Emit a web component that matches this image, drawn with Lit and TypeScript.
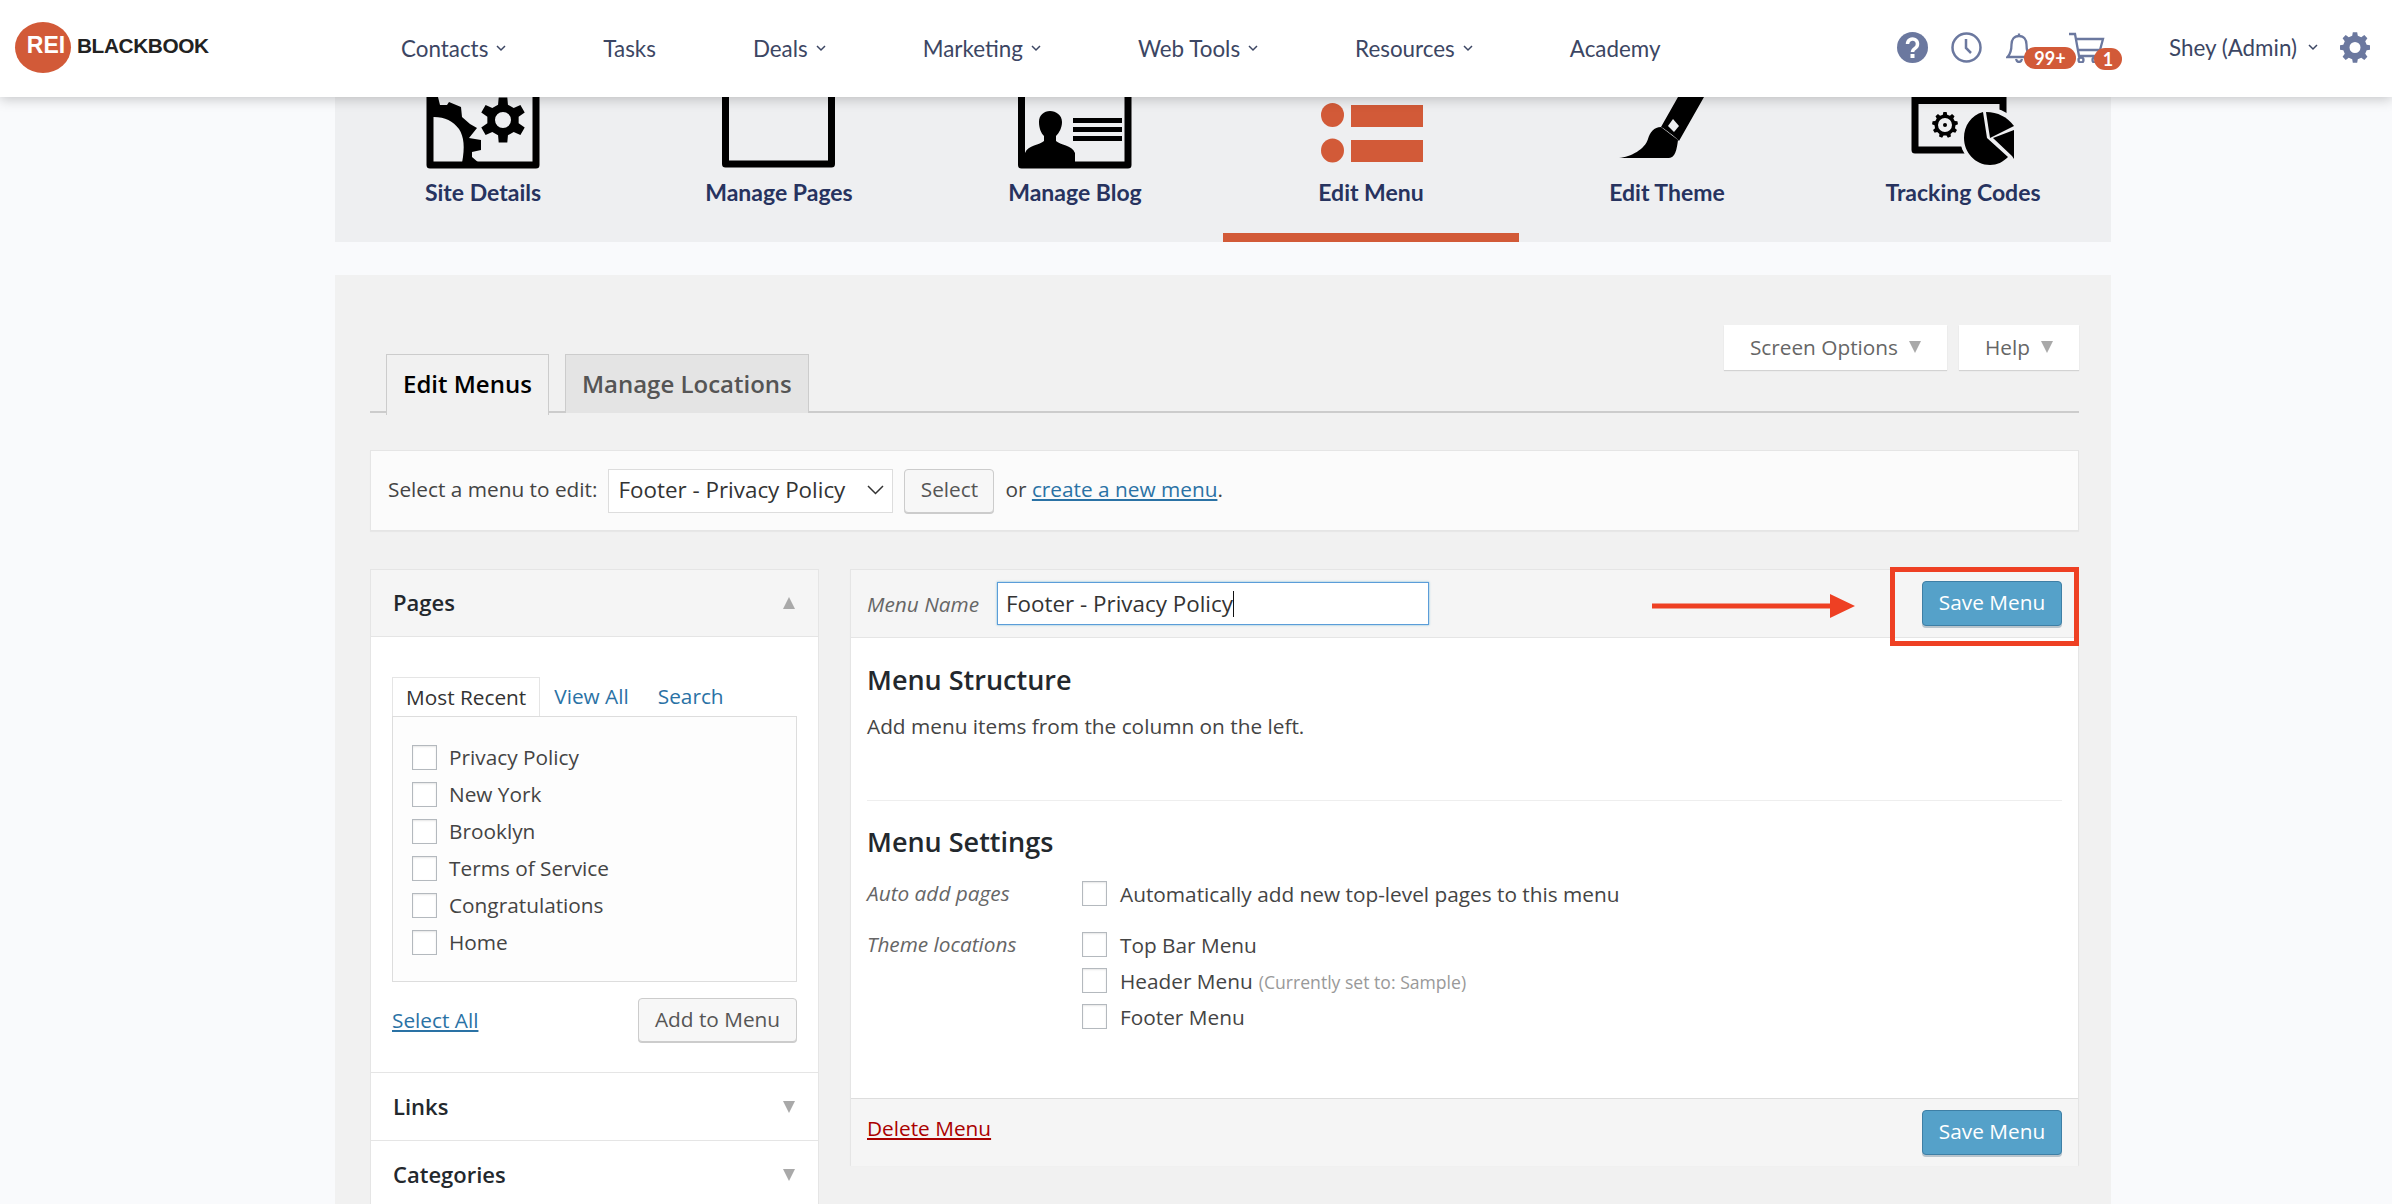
import { LitElement, html, css } from "lit";
import { customElement } from "lit/decorators.js";

// gear outline with a round hole, fill with evenodd
function gearPath(cx: number, cy: number, rOut: number, rIn: number, teeth: number, hole: number) {
  const step = (Math.PI * 2) / teeth;
  const pts: string[] = [];
  const pt = (r: number, a: number) =>
    `${(cx + r * Math.cos(a)).toFixed(2)} ${(cy + r * Math.sin(a)).toFixed(2)}`;
  for (let i = 0; i < teeth; i++) {
    const a = i * step - Math.PI / 2;
    pts.push(pt(rOut, a - step * 0.18), pt(rOut, a + step * 0.18), pt(rIn, a + step * 0.3), pt(rIn, a + step * 0.7));
  }
  const ring = `M${pts.join("L")}Z`;
  return `${ring}M${cx - hole} ${cy}a${hole} ${hole} 0 1 0 ${hole * 2} 0a${hole} ${hole} 0 1 0 ${-hole * 2} 0Z`;
}

const chevron = html`<svg class="chev" width="10" height="7" viewBox="0 0 10 7"><path d="M1 1l4 4 4-4" fill="none" stroke="currentColor" stroke-width="1.500"/></svg>`;

const NAV = [
  { label: "Contacts", drop: true },
  { label: "Tasks", drop: false },
  { label: "Deals", drop: true },
  { label: "Marketing", drop: true },
  { label: "Web Tools", drop: true },
  { label: "Resources", drop: true },
  { label: "Academy", drop: false },
];

const TABS = [
  {
    label: "Site Details",
    icon: html`<svg class="tab-icon" viewBox="0 0 120 72">
      <path d="M7 0V68H113V0" fill="none" stroke="#000" stroke-width="7" stroke-linejoin="round"/>
      <path d="M4 0H15L17 8L24 8L26 5L38 10L39 20L47 27L54 31L46 41L58 43L58 53L49 55L49 60L56 66L39 66C42 50 41 40 36 32C30 24 22 20 11 20L4 20Z"/>
      <path fill-rule="evenodd" d="${gearPath(80, 23, 23, 16, 6, 8)}"/>
    </svg>`,
  },
  {
    label: "Manage Pages",
    icon: html`<svg class="tab-icon" viewBox="0 0 120 72">
      <path d="M6.500 0V67H112.500V0" fill="none" stroke="#000" stroke-width="7" stroke-linejoin="round"/>
    </svg>`,
  },
  {
    label: "Manage Blog",
    icon: html`<svg class="tab-icon" viewBox="0 0 120 72">
      <path d="M6.500 0V68H113V0" fill="none" stroke="#000" stroke-width="7" stroke-linejoin="round"/>
      <path d="M35 14C29 14 24 18 24 25C24 31 26 36 29 39L29 44C25 48 13 48 10 56L10 70H60V56C57 48 45 48 41 44L41 39C44 36 47 31 47 25C47 18 41 14 35 14Z"/>
      <rect x="58" y="21" width="49" height="5"/>
      <rect x="58" y="30" width="49" height="5"/>
      <rect x="58" y="39" width="49" height="5"/>
    </svg>`,
  },
  {
    label: "Edit Menu",
    icon: html`<svg class="tab-icon" viewBox="0 0 120 72" fill="#d25a38">
      <ellipse cx="21.500" cy="18" rx="11.500" ry="12"/>
      <ellipse cx="21.500" cy="53.500" rx="11.500" ry="12"/>
      <rect x="40" y="8" width="72" height="22"/>
      <rect x="40" y="43" width="72" height="22"/>
    </svg>`,
  },
  {
    label: "Edit Theme",
    icon: html`<svg class="tab-icon" viewBox="0 0 120 72">
      <path d="M71 0H97L72 44C71 42 58 32 54 30Z"/>
      <path d="M54 30C47 30 43 35 41 42C38 52 24 60 12 61H62C68 61 70 52 71 43Z"/>
      <path d="M66 22L72 29L67 35L61 29Z" fill="#eeeff1"/>
    </svg>`,
  },
  {
    label: "Tracking Codes",
    icon: html`<svg class="tab-icon" viewBox="0 0 120 72">
      <path d="M12 0V53H100V0" fill="none" stroke="#000" stroke-width="7" stroke-linejoin="round"/>
      <rect x="12" y="0" width="88" height="7"/>
      <path fill-rule="evenodd" d="${gearPath(42, 28, 13, 10.500, 9, 7)}"/>
      <circle cx="42" cy="28" r="2"/>
      <ellipse cx="87" cy="41" rx="30" ry="30" fill="#eeeff1"/>
      <path d="M87 41L83 15C95 15 104 20 111 29Z"/>
      <path d="M84 41L80 15C68 18 61 29 61 41C61 55 72 68 87 68C94 68 100 65 105 60Z"/>
      <path d="M90 41L111 33V62L109 59Z"/>
    </svg>`,
  },
];

const RECENT = ["Privacy Policy", "New York", "Brooklyn", "Terms of Service", "Congratulations", "Home"];

@customElement("app-root")
export class AppRoot extends LitElement {
  static styles = css`
    :host {
      display: block;
      height: 1204px;
      overflow: hidden;
      background: #f9fafc;
      font-family: "Open Sans", sans-serif;
      font-size: 20.800px;
      color: #444;
    }

    * {
      box-sizing: border-box;
    }

    a {
      color: #2a72a5;
    }

    /* top bar */
    .topbar {
      position: relative;
      z-index: 5;
      display: flex;
      align-items: center;
      height: 97px;
      padding-left: 15px;
      background: #fff;
      box-shadow: 0 2px 12px rgba(0, 0, 0, 0.22);
      font-family: Lato, sans-serif;
      font-size: 22.400px;
      color: #3c4663;
    }

    .logo {
      display: flex;
      align-items: center;
      gap: 6px;
      width: 386px;
      margin-top: -2px;
    }

    .logo-mark {
      display: flex;
      align-items: center;
      justify-content: center;
      width: 56px;
      height: 51px;
      padding: 0 0 4px 6px;
      border-radius: 50%;
      background: #d25a38;
      color: #fff;
      font: 700 23px "Liberation Sans", sans-serif;
    }

    .logo-word {
      font: 700 20.800px "Liberation Sans", sans-serif;
      letter-spacing: -0.4px;
      color: #222;
      margin-top: -4px;
    }

    .nav {
      display: flex;
      gap: 97px;
    }

    .nav-item {
      display: flex;
      align-items: center;
      gap: 8px;
    }

    .tools {
      display: flex;
      align-items: center;
      margin-left: auto;
      margin-right: 22px;
      height: 31px;
      margin-top: -2px;
    }

    .tool {
      position: relative;
      display: block;
      height: 31px;
      color: #6b789f;
    }

    .badge {
      position: absolute;
      display: flex;
      align-items: center;
      justify-content: center;
      height: 22px;
      border-radius: 11px;
      background: #d25a38;
      color: #fff;
      font-size: 18px;
      font-weight: 700;
    }

    .badge.bell {
      left: 18px;
      top: 15px;
      width: 52px;
    }

    .badge.cart {
      left: 25px;
      top: 16px;
      width: 28px;
    }

    .user {
      display: flex;
      align-items: center;
      gap: 11px;
      margin-left: 64px;
      margin-right: 22px;
    }

    /* icon tabs */
    .site-tabs {
      display: grid;
      grid-template-columns: repeat(6, 296px);
      width: 1776px;
      height: 145px;
      margin-left: 335px;
      background: #eeeff1;
    }

    .site-tab {
      display: flex;
      flex-direction: column;
      align-items: center;
      font-family: Lato, sans-serif;
      font-size: 23px;
      font-weight: 700;
      line-height: 26px;
      color: #27335f;
    }

    .site-tab.active {
      border-bottom: 9px solid #d25a38;
    }

    .tab-icon {
      display: block;
      width: 120px;
      height: 72px;
      margin-bottom: 10px;
    }

    /* wp admin panel */
    .panel {
      width: 1776px;
      height: 929px;
      margin: 33px 0 0 335px;
      padding: 50px 32px 0 35px;
      background: #f1f1f1;
    }

    .head-row {
      display: flex;
      justify-content: space-between;
      align-items: flex-start;
      height: 88px;
      border-bottom: 2px solid #ccc;
    }

    .wp-tabs {
      display: flex;
      gap: 16px;
      padding: 29px 0 0 16px;
    }

    .wp-tab {
      height: 59px;
      padding: 0 16px;
      line-height: 57px;
      border: 1.500px solid #ccc;
      border-bottom: 0;
      background: #e4e4e4;
      color: #555;
      font-size: 24px;
      font-weight: 600;
    }

    .wp-tab.active {
      height: 61px;
      background: #f1f1f1;
      color: #000;
    }

    .screen-meta {
      display: flex;
      gap: 12px;
    }

    .meta-btn {
      display: flex;
      align-items: center;
      gap: 11px;
      height: 45px;
      padding: 0 26px 2px 26px;
      background: #fff;
      color: #666;
      box-shadow: 0 1px 1px rgba(0, 0, 0, 0.12);
    }

    .down {
      width: 0;
      height: 0;
      border-left: 6.500px solid transparent;
      border-right: 6.500px solid transparent;
      border-top: 12px solid #a9a9a9;
    }

    .up {
      border-top: 0;
      border-bottom: 12px solid #a9a9a9;
    }

    .select-bar {
      display: flex;
      align-items: center;
      height: 81px;
      margin-top: 37px;
      padding-left: 17px;
      border: 1px solid #e5e5e5;
      background: #fbfbfb;
      box-shadow: 0 1px 1px rgba(0, 0, 0, 0.04);
    }

    .bar-text {
      padding-bottom: 3px;
    }

    .select {
      display: flex;
      align-items: center;
      justify-content: space-between;
      width: 285px;
      height: 44px;
      margin-left: 11px;
      padding: 0 8px 2px 9px;
      border: 1px solid #ddd;
      background: #fff;
      color: #333;
      font-size: 22.400px;
    }

    .btn {
      display: flex;
      align-items: center;
      justify-content: center;
      height: 44px;
      padding-bottom: 3px;
      border: 1px solid #ccc;
      border-radius: 4px;
      background: #f7f7f7;
      box-shadow: 0 1px 0 #ccc;
      color: #555;
    }

    .select-btn {
      width: 90px;
      margin: 0 11px;
    }

    .columns {
      display: grid;
      grid-template-columns: 449px 1229px;
      gap: 31px;
      margin-top: 38px;
      align-items: start;
    }

    /* left accordion */
    .pages {
      height: 640px;
      border: 1px solid #e5e5e5;
      background: #fff;
    }

    .acc-head {
      display: flex;
      align-items: center;
      justify-content: space-between;
      height: 68px;
      padding: 0 23px 2px 22px;
      color: #23282d;
      font-size: 22px;
      font-weight: 600;
    }

    .acc-head .down {
      margin-top: 2px;
    }

    .acc-head.open {
      height: 67px;
      background: #f5f5f5;
      border-bottom: 1px solid #e5e5e5;
    }

    .acc-head.closed {
      border-top: 1px solid #e5e5e5;
    }

    .acc-body {
      height: 435px;
      padding: 40px 21px 0;
    }

    .mini-tabs {
      display: flex;
      align-items: flex-end;
      height: 39px;
    }

    .mini-tab {
      height: 39px;
      line-height: 38px;
      padding: 0 13px;
      border: 1px solid #e5e5e5;
      border-bottom: 0;
      color: #333;
    }

    .mini-link {
      height: 39px;
      line-height: 38px;
      margin-left: 14px;
      margin-right: 15px;
      color: #2a72a5;
    }

    .recent {
      display: flex;
      flex-direction: column;
      gap: 12px;
      height: 266px;
      padding: 28px 19px 0;
      border: 1px solid #ddd;
      background: #fdfdfd;
    }

    .check-row {
      display: flex;
      align-items: center;
      gap: 13px;
      height: 25px;
    }

    .recent .check-row {
      gap: 12px;
    }

    .recent .check-row span {
      padding-bottom: 2px;
    }

    .check {
      flex: none;
      width: 25px;
      height: 25px;
      margin: 0;
      appearance: none;
      border: 1px solid #b4b9be;
      background: #fff;
      box-shadow: inset 0 1px 2px rgba(0, 0, 0, 0.1);
    }

    .acc-foot {
      display: flex;
      align-items: center;
      justify-content: space-between;
      margin-top: 16px;
    }

    .add-btn {
      width: 159px;
    }

    /* right column */
    .menu-box {
      height: 596px;
      border: 1px solid #e5e5e5;
      background: #fff;
      box-shadow: 0 1px 1px rgba(0, 0, 0, 0.04);
    }

    .menu-head {
      position: relative;
      display: flex;
      align-items: center;
      height: 68px;
      padding: 0 16px 0 16px;
      background: #f5f5f5;
      border-bottom: 1px solid #e5e5e5;
    }

    .menu-label {
      width: 130px;
      font-style: italic;
      color: #666;
    }

    .name-input {
      display: flex;
      align-items: center;
      width: 432px;
      height: 43px;
      padding-left: 8px;
      border: 1.500px solid #5b9dd9;
      background: #fff;
      color: #333;
      font-size: 22.400px;
      box-shadow: 0 0 2px rgba(30, 140, 190, 0.6);
    }

    .caret {
      width: 1.500px;
      height: 26px;
      background: #111;
    }

    .primary {
      display: flex;
      align-items: center;
      justify-content: center;
      width: 140px;
      height: 45px;
      padding-bottom: 3px;
      margin-left: auto;
      border: 1px solid #3e7fa5;
      border-radius: 4px;
      background: #55a1c9;
      box-shadow: 0 2px 0 #b8c4cc;
      color: #fff;
    }

    .callout {
      position: absolute;
      top: -3px;
      right: -1px;
      width: 189px;
      height: 79px;
      border: 5px solid #ee4023;
      pointer-events: none;
    }

    .arrow {
      position: absolute;
      left: 801px;
      top: 23px;
    }

    .menu-body {
      height: 460px;
      padding: 0 16px;
    }

    .block-title {
      margin: 0;
      font-size: 27px;
      font-weight: 600;
      color: #23282d;
      line-height: 34px;
    }

    .structure {
      height: 163px;
      padding-top: 25px;
      margin-bottom: 0;
      border-bottom: 1.500px solid #eee;
    }

    .structure p {
      margin: 15px 0 0;
    }

    .settings {
      padding-top: 24px;
    }

    .settings-grid {
      display: grid;
      grid-template-columns: 215px 1fr;
      margin-top: 22px;
    }

    .settings-label {
      font-style: italic;
      color: #666;
      line-height: 24px;
    }

    .settings-value {
      display: flex;
      flex-direction: column;
      gap: 11px;
    }

    .settings-value + .settings-label,
    .settings-value + .settings-label + .settings-value {
      margin-top: 26px;
    }

    .note {
      font-size: 17.600px;
      color: #999;
      margin-left: 6px;
    }

    .menu-foot {
      display: flex;
      align-items: center;
      height: 68px;
      padding: 0 10px 0 16px;
      background: #f5f5f5;
      border-top: 1px solid #ddd;
    }

    .menu-foot .primary {
      margin-right: 6px;
    }

    .delete {
      margin-top: -9px;
      color: #a00;
    }
  `;

  render() {
    return html`
      <header class="topbar">
        <div class="logo">
          <div class="logo-mark">REI</div>
          <div class="logo-word">BLACKBOOK</div>
        </div>
        <nav class="nav">
          ${NAV.map((n) => html`<div class="nav-item">${n.label}${n.drop ? chevron : ""}</div>`)}
        </nav>
        <div class="tools">
          ${this.renderTools()}
        </div>
      </header>

      <div class="site-tabs">
        ${TABS.map(
          (t) => html`<div class="site-tab ${t.label === "Edit Menu" ? "active" : ""}">${t.icon}${t.label}</div>`
        )}
      </div>

      <main class="panel">
        <div class="head-row">
          <div class="wp-tabs">
            <div class="wp-tab active">Edit Menus</div>
            <div class="wp-tab">Manage Locations</div>
          </div>
          <div class="screen-meta">
            <div class="meta-btn">Screen Options <span class="down"></span></div>
            <div class="meta-btn">Help <span class="down"></span></div>
          </div>
        </div>

        <div class="select-bar">
          <span class="bar-text">Select a menu to edit:</span>
          <div class="select">
            Footer - Privacy Policy
            <svg width="17" height="10" viewBox="0 0 17 10"><path d="M1 1l7.500 7.500L16 1" fill="none" stroke="#333" stroke-width="1.500"/></svg>
          </div>
          <div class="btn select-btn">Select</div>
          <span class="bar-text">or <a href="#">create a new menu</a>.</span>
        </div>

        <div class="columns">
          <section class="pages">
            <div class="acc-head open">Pages <span class="down up"></span></div>
            <div class="acc-body">
              <div class="mini-tabs">
                <div class="mini-tab">Most Recent</div>
                <div class="mini-link">View All</div>
                <div class="mini-link">Search</div>
              </div>
              <div class="recent">
                ${RECENT.map(
                  (r) => html`<label class="check-row"><input class="check" type="checkbox" /><span>${r}</span></label>`
                )}
              </div>
              <div class="acc-foot">
                <a href="#">Select All</a>
                <div class="btn add-btn">Add to Menu</div>
              </div>
            </div>
            <div class="acc-head closed">Links <span class="down"></span></div>
            <div class="acc-head closed">Categories <span class="down"></span></div>
          </section>

          <section class="menu-box">
            <div class="menu-head">
              <div class="menu-label">Menu Name</div>
              <div class="name-input">Footer - Privacy Policy<span class="caret"></span></div>
              <div class="primary">Save Menu</div>
              <svg class="arrow" width="203" height="26" viewBox="0 0 203 26">
                <path d="M0 10.500H178V1L203 13L178 25V15.500H0Z" fill="#ee4023"/>
              </svg>
              <div class="callout"></div>
            </div>
            <div class="menu-body">
              <div class="structure">
                <h3 class="block-title">Menu Structure</h3>
                <p>Add menu items from the column on the left.</p>
              </div>
              <div class="settings">
                <h3 class="block-title">Menu Settings</h3>
                <div class="settings-grid">
                  <div class="settings-label">Auto add pages</div>
                  <div class="settings-value">
                    <label class="check-row"><input class="check" type="checkbox" />Automatically add new top-level pages to this menu</label>
                  </div>
                  <div class="settings-label">Theme locations</div>
                  <div class="settings-value">
                    <label class="check-row"><input class="check" type="checkbox" />Top Bar Menu</label>
                    <label class="check-row"><input class="check" type="checkbox" /><span>Header Menu<span class="note">(Currently set to: Sample)</span></span></label>
                    <label class="check-row"><input class="check" type="checkbox" />Footer Menu</label>
                  </div>
                </div>
              </div>
            </div>
            <div class="menu-foot">
              <a class="delete" href="#">Delete Menu</a>
              <div class="primary">Save Menu</div>
            </div>
          </section>
        </div>
      </main>
    `;
  }

  renderTools() {
    return html`
      <svg class="tool" width="31" height="31" viewBox="0 0 31 31">
        <circle cx="15.500" cy="15.500" r="15.500" fill="currentColor"/>
        <path d="M10.500 12a5 5 0 1 1 7.800 4.100c-1.800 1.200-2.800 2-2.800 4" fill="none" stroke="#fff" stroke-width="3.500"/>
        <rect x="13.500" y="22" width="4" height="4" fill="#fff"/>
      </svg>
      <svg class="tool" style="margin-left:23px" width="31" height="31" viewBox="0 0 31 31" fill="none" stroke="currentColor">
        <circle cx="15.500" cy="15.500" r="14" stroke-width="2.500"/>
        <path d="M15 7v9l5 5" stroke-width="2.500"/>
      </svg>
      <div class="tool" style="margin-left:24px;width:63px">
        <svg width="28" height="31" viewBox="0 0 28 31" fill="none" stroke="currentColor" stroke-width="2.300">
          <path d="M13 1.500v2.500M13 4c-5 0-7.500 4-7.500 8.500 0 6-1.500 10-4 12.500h23c-2.500-2.500-4-6.500-4-12.500C20.500 8 18 4 13 4Z"/>
          <path d="M10 27c.5 2 1.500 3 3 3s2.500-1 3-3"/>
        </svg>
        <div class="badge bell">99+</div>
      </div>
      <div class="tool" style="width:36px">
        <svg width="36" height="31" viewBox="0 0 36 31" fill="none" stroke="currentColor" stroke-width="2.300">
          <path d="M0 2h6l4 22h18M7 7h27l-3 11H9"/>
          <circle cx="12" cy="28" r="2.500"/>
          <circle cx="26" cy="28" r="2.500"/>
        </svg>
        <div class="badge cart">1</div>
      </div>
      <div class="user">Shey (Admin) ${chevron}</div>
      <svg class="tool" width="30" height="31" viewBox="0 0 30 31">
        <path fill="currentColor" fill-rule="evenodd" d="${gearPath(15, 15.5, 15.5, 12, 8, 5.500)}"/>
      </svg>
    `;
  }
}
